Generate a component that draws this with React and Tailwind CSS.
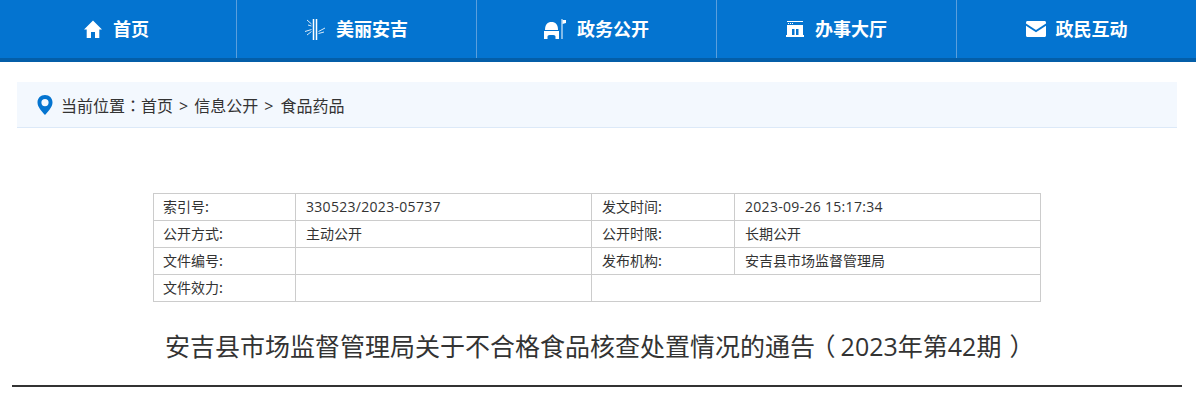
import React from 'react';

const cjk = "font-['Noto_Sans_CJK_SC','Noto_Sans',sans-serif]";
const latin = "font-['Open_Sans','Noto_Sans_CJK_SC',sans-serif]";
const centered = "font-['Noto_Sans_CJK_TC',sans-serif]";

function HomeIcon() {
    return (
        <svg width="18" height="18" viewBox="0 0 18 18" fill="white">
            <path d="M9 0.5 L18 9.5 H15.3 V18 H11 V12 H7 V18 H2.7 V9.5 H0 Z" />
        </svg>
    );
}

function BambooIcon() {
    return (
        <svg width="21" height="21" viewBox="0 0 21 21" fill="none" stroke="white">
            <path d="M8.5 0 V21 M11.5 0 V21" strokeWidth="1.5" />
            <path d="M2 1 L6.5 5 M3 6 L6.5 7 M0 12.5 L6.5 10.5 M2 16 L6.5 12.5 M20 9 L13.5 12.5 M19 13 L13.5 14.5" strokeWidth="1" opacity="0.85" />
        </svg>
    );
}

function GovIcon() {
    return (
        <svg width="22" height="20" viewBox="0 0 22 20" fill="white">
            <path d="M1 11 C1 5.5 3.5 3 7.5 3 C11.5 3 14 5.5 14 11 Z" />
            <path d="M0 12 H15 V20 H11.5 V17.5 C11.5 16.4 10 16 7.5 16 C5 16 3.5 16.4 3.5 17.5 V20 H0 Z" />
            <path d="M17.5 0 H18.5 V20 H17.5 Z" />
            <path d="M18.5 1 H22 V4 L18.5 5 Z" />
        </svg>
    );
}

function OfficeIcon() {
    return (
        <svg width="18" height="16" viewBox="0 0 18 16" fill="white">
            <path d="M1 0 H17 V1 H1 Z" />
            <path d="M2 2 H3 V3 H2 Z M4 2 H5 V3 H4 Z M6 2 H7 V3 H6 Z" />
            <path fillRule="evenodd" d="M1 4 H17 V14 H1 Z M6 8 V14 H8.5 V8 Z M10 8 V14 H12.5 V8 Z" />
            <path d="M0 14 H18 V16 H0 Z" />
        </svg>
    );
}

function MailIcon() {
    return (
        <svg width="20" height="16" viewBox="0 0 20 16" fill="white">
            <path d="M1.5 0 H18.5 C19.4 0 20 .6 20 1.5 V2.5 L10 9 L0 2.5 V1.5 C0 .6 .6 0 1.5 0 Z" />
            <path d="M0 4.8 L10 11.2 L20 4.8 V14.5 C20 15.4 19.4 16 18.5 16 H1.5 C.6 16 0 15.4 0 14.5 Z" />
        </svg>
    );
}

function PinIcon() {
    return (
        <svg width="16" height="20" viewBox="0 0 16 20" fill="#0474d0">
            <path fillRule="evenodd" d="M8 0 C3.6 0 0.5 3.2 0.5 7.4 C0.5 12 5 16.5 8 20 C11 16.5 15.5 12 15.5 7.4 C15.5 3.2 12.4 0 8 0 Z M8 4 A3.6 3.6 0 1 1 8 11.2 A3.6 3.6 0 1 1 8 4 Z" />
        </svg>
    );
}

const navItems = [
    { label: '首页', icon: <HomeIcon />, cls: 'w-[237px] border-r gap-[11px] pr-[3px]' },
    { label: '美丽安吉', icon: <BambooIcon />, cls: 'w-[240px] border-r gap-[10px]' },
    { label: '政务公开', icon: <GovIcon />, cls: 'w-[240px] border-r gap-[11px]' },
    { label: '办事大厅', icon: <OfficeIcon />, cls: 'w-[240px] border-r gap-[11px]' },
    { label: '政民互动', icon: <MailIcon />, cls: 'flex-1 gap-[10px]' },
];

const rows = [
    ['索引号:', '330523/2023-05737', '发文时间:', '2023-09-26 15:17:34'],
    ['公开方式:', '主动公开', '公开时限:', '长期公开'],
    ['文件编号:', '', '发布机构:', '安吉县市场监督管理局'],
];

const cell = 'border border-[#cccccc] h-[27px] p-0 text-left font-normal';
const labelCell = `${cell} pb-[2px]`;
const valueCell = `${cell} pl-[10px]`;

export default function App() {
    return (
        <div className={`w-[1196px] h-[415px] overflow-hidden bg-white text-[#333333] ${cjk}`}>
            {/* top nav */}
            <div className="flex h-[62px] bg-[#0474d0] border-b-4 border-[#045ea8]">
                {navItems.map((item) => (
                    <div key={item.label} className={`flex items-center justify-center border-[#5b9fdc] ${item.cls}`}>
                        {item.icon}
                        <span className="text-white text-[18px] font-bold leading-none -mt-[2px]">{item.label}</span>
                    </div>
                ))}
            </div>

            {/* breadcrumb */}
            <div className="mt-5 mx-[17px] w-[1160px] h-[46px] flex items-center gap-[8px] pl-5 bg-[#f3f8fe] border-b border-[#dce9f8] text-[16px]">
                <PinIcon />
                <span className="whitespace-pre h-[24px] leading-[24px]">
                    当前位置<span className={centered}>：</span>首页<span className={`${latin} mx-[6px]`}>&gt;</span>信息公开<span className={`${latin} ml-[6px] mr-[7px]`}>&gt;</span>食品药品
                </span>
            </div>

            {/* info table */}
            <table className="mt-[65px] ml-[153px] w-[887px] table-fixed border-collapse text-[14px] leading-none">
                <colgroup>
                    <col className="w-[142px]" />
                    <col className="w-[296px]" />
                    <col className="w-[143px]" />
                    <col className="w-[306px]" />
                </colgroup>
                <tbody>
                    {rows.map((row, r) => (
                        <tr key={row[0]}>
                            <td className={`${labelCell} pl-[9px]`}>{row[0]}</td>
                            <td className={`${valueCell} ${latin} ${r === 0 ? 'tracking-[0.3px]' : ''}`}>{row[1]}</td>
                            <td className={`${labelCell} pl-[10px]`}>{row[2]}</td>
                            <td className={`${valueCell} ${latin} ${r === 0 ? 'tracking-[0.3px]' : ''}`}>{row[3]}</td>
                        </tr>
                    ))}
                    <tr>
                        <td className={`${labelCell} pl-[9px]`}>文件效力:</td>
                        <td className={valueCell}></td>
                        <td className={valueCell} colSpan={2}></td>
                    </tr>
                </tbody>
            </table>

            {/* title */}
            <h1 className={`mt-[26px] h-[36px] text-center text-[25px] font-normal leading-[36px] pr-[1px] ${latin}`}>
                安吉县市场监督管理局关于不合格食品核查处置情况的通告<span className="ml-[7px] mr-[6px] [font-feature-settings:'palt']">（</span>2023年第42期<span className="ml-[9px] mr-[7px] [font-feature-settings:'palt']">）</span>
            </h1>
            <div className="mt-[21px] mx-3 w-[1170px] h-[2px] bg-[#333333]" />
        </div>
    );
}
